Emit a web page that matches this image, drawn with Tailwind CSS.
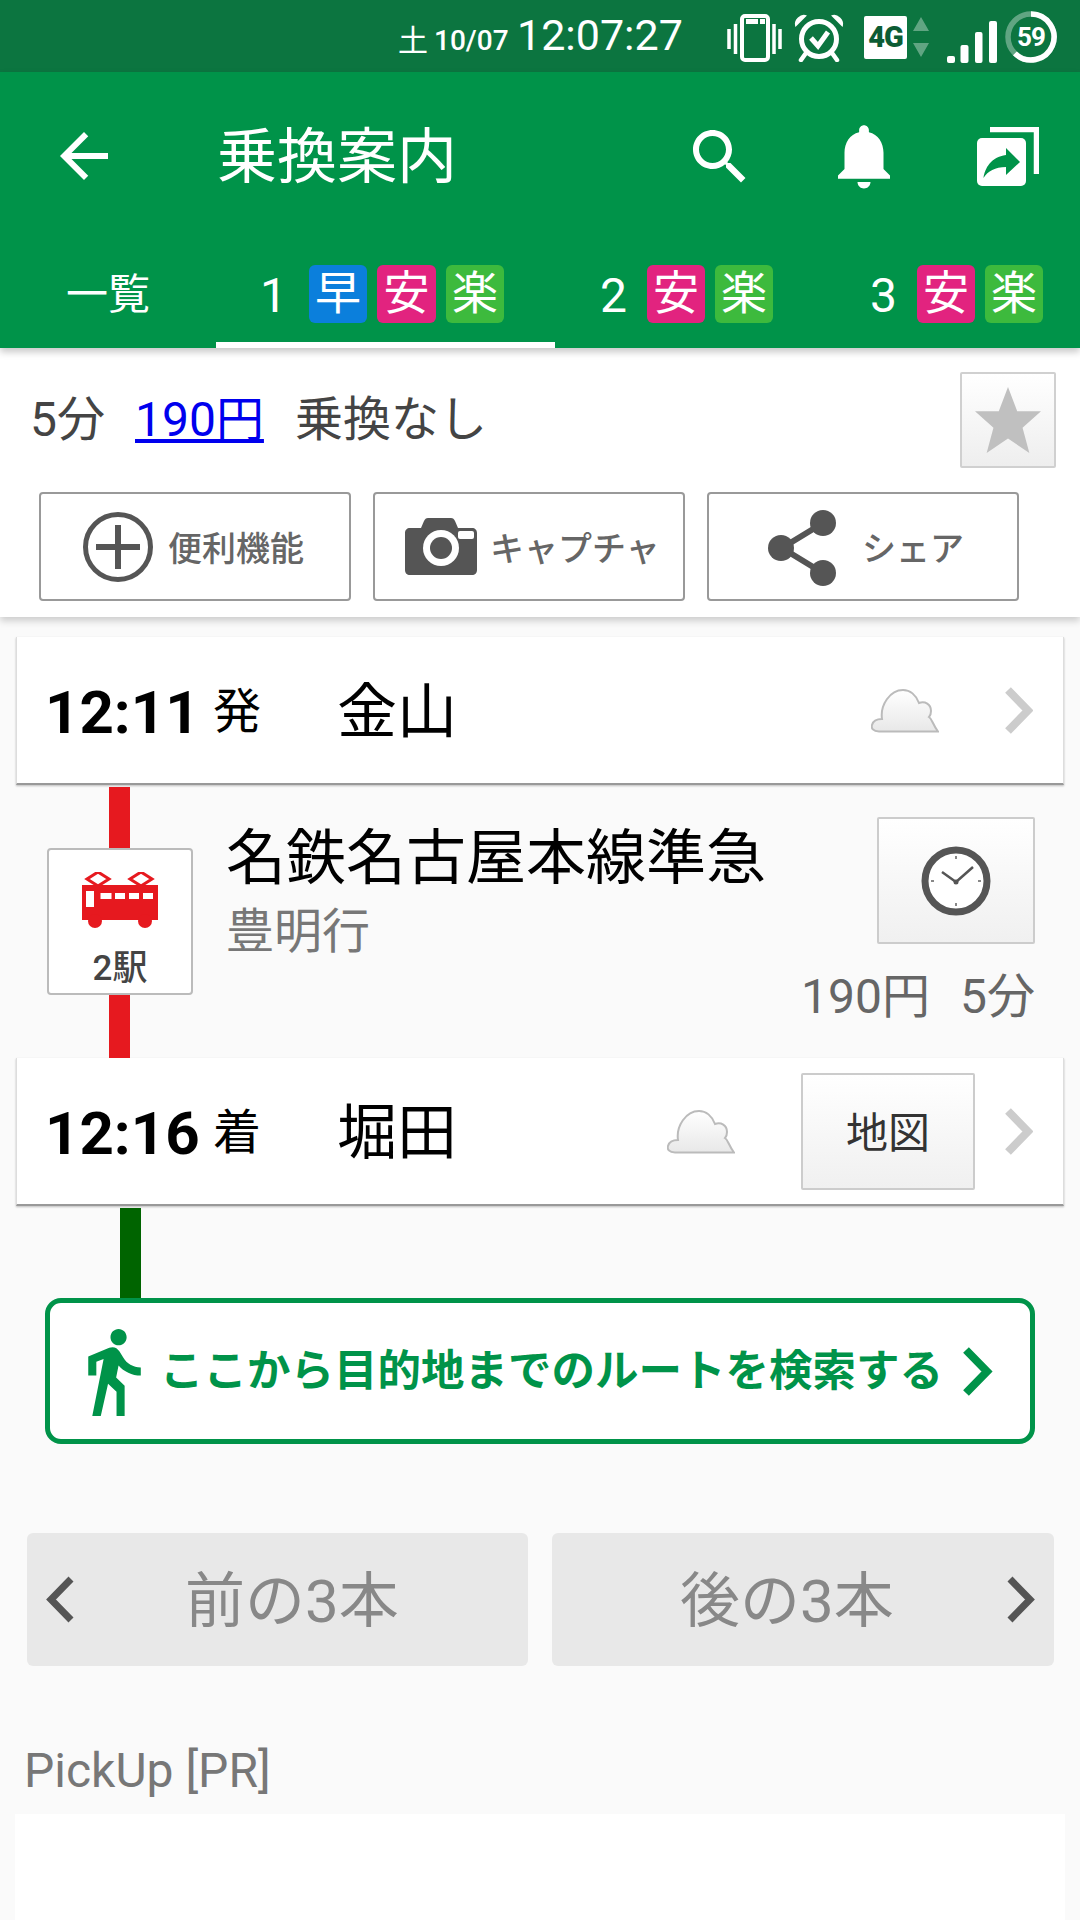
<!DOCTYPE html>
<html lang="ja">
<head>
  <meta charset="UTF-8" />
  <meta name="viewport" content="width=device-width, initial-scale=1.0" />
  <title>乗換案内</title>
  <script src="https://cdn.jsdelivr.net/npm/@tailwindcss/browser@4"></script>
</head>
<body class="bg-[#fafafa] w-[1080px] h-[1920px] overflow-hidden font-[Roboto,'Noto_Sans_CJK_JP',sans-serif]">

  <!-- STATUS BAR -->
  <div class="h-[72px] bg-[#0c7540] flex items-center text-white">
    <span class="ml-[398px] text-[30px] leading-none mt-[10px] w-[36px]">土</span>
    <span class="text-[28px] font-medium leading-none mt-[10px] w-[83px]">10/07</span>
    <span class="text-[43px] leading-none w-[209px] mt-[-2px]">12:07:27</span>
    <svg class="w-[56px] h-[48px] mt-[3px]" viewBox="0 0 56 48">
      <rect x="16" y="2" width="26" height="44" rx="3" fill="none" stroke="#fff" stroke-width="4"/>
      <rect x="20" y="5" width="12" height="5" fill="#fff"/>
      <rect x="34" y="5" width="5" height="5" fill="#fff"/>
      <path d="M3 15v20M9.500 10v30M48 10v30M54 15v20" stroke="#fff" stroke-width="3.500"/>
    </svg>
    <svg class="w-[52px] h-[48px] ml-[11px] mt-[3px]" viewBox="0 0 52 48">
      <circle cx="26" cy="25" r="17.500" fill="none" stroke="#fff" stroke-width="5"/>
      <path d="M18 24l7 8 10-14" fill="none" stroke="#fff" stroke-width="5"/>
      <path d="M3 11L12 2c-4-1-10 4-9 9zM49 11L40 2c4-1 10 4 9 9z" fill="#fff" stroke="#fff" stroke-width="2"/>
      <path d="M13 39l-5 7M39 39l5 7" stroke="#fff" stroke-width="4.500" stroke-linecap="round"/>
    </svg>
    <div class="w-[43px] h-[43px] ml-[19px] mt-[3px] bg-white rounded-[2px] text-[#0c5c34] text-[29px] leading-[43px] font-black text-center tracking-[-1px]">4G</div>
    <svg class="w-[16px] h-[40px] ml-[6px] mt-[2px]" viewBox="0 0 16 40">
      <path d="M8 0l8 14H0zM0 26h16L8 40z" fill="#fff" fill-opacity="0.35"/>
    </svg>
    <svg class="w-[50px] h-[42px] ml-[18px] mt-[11px]" viewBox="0 0 50 42">
      <rect x="0" y="35" width="8" height="7" rx="2" fill="#fff"/>
      <rect x="13.500" y="24" width="8" height="18" rx="2" fill="#fff"/>
      <rect x="28" y="11" width="7.500" height="31" rx="2" fill="#fff"/>
      <rect x="42" y="0" width="8" height="42" rx="2" fill="#fff"/>
    </svg>
    <div class="relative w-[52px] h-[52px] ml-[8px] mt-[1px] flex items-center justify-center">
      <svg class="absolute inset-0" viewBox="0 0 52 52">
        <circle cx="26" cy="26" r="23" fill="none" stroke="#fff" stroke-opacity="0.35" stroke-width="5.500"/>
        <path d="M26 3A23 23 0 1 1 9.900 42.400" fill="none" stroke="#fff" stroke-width="5.500"/>
      </svg>
      <span class="text-[26px] leading-none font-bold tracking-[-1px]">59</span>
    </div>
  </div>

  <div class="relative z-10 shadow-[0_4px_7px_rgba(0,0,0,0.22)]">
    <!-- APP BAR -->
    <div class="h-[168px] bg-[#009349] flex items-center text-white">
      <svg class="w-[72px] h-[72px] ml-[48px]" viewBox="0 0 24 24" fill="#fff"><path d="M20 11H7.830l5.590-5.590L12 4l-8 8 8 8 1.410-1.410L7.830 13H20v-2z"/></svg>
      <h1 class="ml-[97px] text-[60px] leading-none font-normal mt-[4px]">乗換案内</h1>
      <svg class="w-[72px] h-[72px] ml-[227px] mt-[2px]" viewBox="0 0 24 24" fill="#fff"><path d="M15.500 14h-.790l-.280-.270C15.410 12.590 16 11.110 16 9.500 16 5.910 13.090 3 9.500 3S3 5.910 3 9.500 5.910 16 9.500 16c1.610 0 3.090-.590 4.230-1.570l.270.280v.790l5 4.990L20.490 19l-4.990-5zm-6 0C7.010 14 5 11.990 5 9.500S7.010 5 9.500 5 14 7.010 14 9.500 11.990 14 9.500 14z"/></svg>
      <svg class="w-[78px] h-[78px] ml-[69px]" viewBox="0 0 24 24" fill="#fff"><path d="M12 22c1.100 0 2-.900 2-2h-4c0 1.100.890 2 2 2zm6-6v-5c0-3.070-1.640-5.640-4.500-6.320V4c0-.830-.670-1.500-1.500-1.500s-1.500.670-1.500 1.500v.680C7.630 5.360 6 7.920 6 11v5l-2 2v1h16v-1l-2-2z"/></svg>
      <svg class="w-[62px] h-[59px] ml-[74px]" viewBox="0 0 62 59">
        <path d="M13 2.500h46.500V47" fill="none" stroke="#fff" stroke-width="5.500"/>
        <rect x="0" y="11" width="49" height="48" rx="5" fill="#fff"/>
        <path d="M29 21L43 35 29 48v-8c-11 0-18 4-22.500 11C8 41 14 30 29 28z" fill="#009349"/>
      </svg>
    </div>
    <!-- TABS -->
    <div class="h-[108px] bg-[#009349] flex text-white">
      <div class="w-[216px] pl-[66px] pt-[30px] text-[42px] leading-[50px]">一覧</div>
      <div class="w-[339px] pl-[44px] flex items-center border-b-[6px] border-white">
        <span class="w-[49px] text-[48px] leading-none mt-[10px]">1</span>
        <span class="w-[58px] h-[58px] mt-[6px] mr-[10px] rounded-md bg-[#0b7fdc] text-[46px] leading-[57px] text-center">早</span>
        <span class="w-[59px] h-[58px] mt-[6px] mr-[10px] rounded-md bg-[#e2237f] text-[46px] leading-[57px] text-center">安</span>
        <span class="w-[58px] h-[58px] mt-[6px] rounded-md bg-[#3dba3d] text-[46px] leading-[57px] text-center">楽</span>
      </div>
      <div class="w-[270px] pl-[45px] flex items-center">
        <span class="w-[47px] text-[48px] leading-none mt-[4px]">2</span>
        <span class="w-[58px] h-[58px] mr-[10px] rounded-md bg-[#e2237f] text-[46px] leading-[57px] text-center">安</span>
        <span class="w-[58px] h-[58px] rounded-md bg-[#3dba3d] text-[46px] leading-[57px] text-center">楽</span>
      </div>
      <div class="w-[255px] pl-[45px] flex items-center">
        <span class="w-[47px] text-[48px] leading-none mt-[4px]">3</span>
        <span class="w-[58px] h-[58px] mr-[10px] rounded-md bg-[#e2237f] text-[46px] leading-[57px] text-center">安</span>
        <span class="w-[58px] h-[58px] rounded-md bg-[#3dba3d] text-[46px] leading-[57px] text-center">楽</span>
      </div>
    </div>
  </div>

  <!-- SUMMARY -->
  <section class="h-[269px] bg-white shadow-[0_4px_7px_rgba(0,0,0,0.18)] relative pt-[24px]">
    <div class="flex items-center h-[96px] pl-[30px] text-[48px] text-[#444] leading-none">
      <span class="w-[105px]">5分</span>
      <a href="#" class="w-[160px] text-[#0000ee] underline">190円</a>
      <span>乗換なし</span>
      <button class="ml-auto mr-[24px] w-[96px] h-[96px] flex items-center justify-center border-2 border-[#d0d0d0] rounded-[2px] bg-linear-to-b from-white to-[#eeeeee]">
        <svg class="w-[66px] h-[66px]" viewBox="0 0 68 68"><path d="M34 0l9.500 25H68L49 42l7 26-22-15-22 15 7-26L0 25h24.500z" fill="#c0c0c0"/></svg>
      </button>
    </div>
    <div class="flex mt-[24px] ml-[39px] text-[34px] font-medium text-[#666] leading-none">
      <button class="w-[312px] h-[109px] border-2 border-[#999] rounded-[4px] flex items-center pl-[42px] pt-[4px]">
        <svg class="w-[70px] h-[70px] mr-[15px] mt-[-4px]" viewBox="0 0 70 70" fill="none" stroke="#555"><circle cx="35" cy="35" r="32.500" stroke-width="5"/><path d="M13 35h44M35 13v44" stroke-width="6"/></svg>
        便利機能
      </button>
      <button class="w-[312px] h-[109px] ml-[22px] border-2 border-[#999] rounded-[4px] flex items-center pl-[30px] pt-[4px]">
        <svg class="w-[72px] h-[57px] mr-[13px] mt-[-4px]" viewBox="0 0 72 57">
          <path d="M5 10h11l3-7c1-2 2-3 4-3h23c2 0 3 1 4 3l3 7h14c3 0 5 2 5 5v37c0 3-2 5-5 5H5c-3 0-5-2-5-5V15c0-3 2-5 5-5z" fill="#555"/>
          <circle cx="36" cy="30" r="18" fill="#fff"/><circle cx="36" cy="30" r="11" fill="#555"/>
          <rect x="53" y="13" width="16" height="8" rx="2" fill="#fff"/>
        </svg>
        キャプチャ
      </button>
      <button class="w-[312px] h-[109px] ml-[22px] border-2 border-[#999] rounded-[4px] flex items-center pl-[57px] pt-[4px]">
        <svg class="w-[72px] h-[76px] mr-[24px] mt-[-2px]" viewBox="0 0 72 76" fill="#555">
          <path d="M57 13L16 38l41 25" fill="none" stroke="#555" stroke-width="6"/>
          <circle cx="57" cy="13" r="13"/><circle cx="15" cy="38" r="13"/><circle cx="57" cy="63" r="13"/>
        </svg>
        シェア
      </button>
    </div>
  </section>

  <!-- ROUTE -->
  <main class="pt-[20px]">
    <div class="mx-[16px] h-[148px] bg-white border-x border-[#ddd] border-b-2 border-b-[#999] shadow-[0_1px_2px_rgba(0,0,0,0.25)] flex items-center pl-[28px] pr-[30px] text-black">
      <span class="w-[168px] text-[60px] font-bold leading-none mt-[6px]">12:11</span>
      <span class="w-[124px] text-[48px] leading-none mt-[4px]">発</span>
      <span class="text-[60px] leading-none mt-[6px]">金山</span>
      <svg class="ml-auto w-[68px] h-[45px]" viewBox="0 0 68 45">
        <defs><linearGradient id="cloud" x1="0" y1="0" x2="0" y2="1"><stop offset="0" stop-color="#fff"/><stop offset="1" stop-color="#e8e8e8"/></linearGradient></defs>
        <path d="M8 43.500C2 43.500 0 40 1 37c1-4 5-6 10-6 -2-14 8-29 21-29 7 0 13 5 16 13 6-2 12 1 12 8 0 3-1 5-2 6 3 2 3 6 9 14.500z" fill="url(#cloud)" stroke="#bbb" stroke-width="2"/>
      </svg>
      <svg class="ml-[66px] w-[28px] h-[47px]" viewBox="0 0 28 47"><path d="M3 3l20 20.500L3 44" fill="none" stroke="#ccc" stroke-width="8"/></svg>
    </div>

    <div class="relative h-[273px] flex pl-[47px]">
      <div class="absolute left-[109px] top-[2px] bottom-0 w-[21px] bg-[#e6191f]"></div>
      <div class="relative mt-[63px] w-[146px] h-[147px] bg-white border-2 border-[#bbb] rounded-[4px] flex flex-col items-center pt-[22px]">
        <svg class="w-[76px] h-[56px]" viewBox="0 0 76 56" fill="#e6191f">
          <path d="M16 0l11 7-11 7L5 7zM59 0l11 7-11 7-11-7z" fill="none" stroke="#e6191f" stroke-width="3"/>
          <path d="M0 13h76v35H0z"/>
          <circle cx="13" cy="49" r="7"/><circle cx="63" cy="49" r="7"/>
          <path d="M4 19h8v16H4zM18.500 21h11v6h-11zM33 21h10v6H33zM47 21h10v6H47zM61 21h10v6H61z" fill="#fff"/>
        </svg>
        <span class="mt-[21px] text-[35px] font-medium text-[#444] leading-[40px]">2駅</span>
      </div>
      <div class="ml-[33px] pt-[44px]">
        <div class="text-[60px] text-black leading-[60px] whitespace-nowrap">名鉄名古屋本線準急</div>
        <div class="mt-[19px] text-[48px] text-[#777] leading-[48px]">豊明行</div>
      </div>
      <div class="absolute right-[45px] top-[32px] flex flex-col items-end">
        <button class="w-[158px] h-[127px] border-2 border-[#ccc] rounded-[2px] bg-linear-to-b from-white to-[#f0f0f0] flex items-center justify-center">
          <svg class="w-[70px] h-[70px]" viewBox="0 0 70 70">
            <circle cx="35" cy="35" r="31" fill="#fff" stroke="#555" stroke-width="7"/>
            <path d="M35 36L21 26M35 36L52 21" stroke="#555" stroke-width="2.500" fill="none"/>
            <circle cx="35" cy="36" r="2.500" fill="#555"/>
            <path d="M35 10v3M35 57v3M10 35h3M57 35h3" stroke="#888" stroke-width="2"/>
          </svg>
        </button>
        <div class="mt-[25px] flex gap-[30px] text-[48px] leading-[56px] text-[#666] whitespace-nowrap"><span>190円</span><span>5分</span></div>
      </div>
    </div>

    <div class="mx-[16px] h-[148px] bg-white border-x border-[#ddd] border-b-2 border-b-[#999] shadow-[0_1px_2px_rgba(0,0,0,0.25)] flex items-center pl-[28px] pr-[30px] text-black">
      <span class="w-[168px] text-[60px] font-bold leading-none mt-[6px]">12:16</span>
      <span class="w-[124px] text-[48px] leading-none mt-[4px]">着</span>
      <span class="text-[60px] leading-none mt-[6px]">堀田</span>
      <svg class="ml-auto w-[68px] h-[45px]" viewBox="0 0 68 45">
        <path d="M8 43.500C2 43.500 0 40 1 37c1-4 5-6 10-6 -2-14 8-29 21-29 7 0 13 5 16 13 6-2 12 1 12 8 0 3-1 5-2 6 3 2 3 6 9 14.500z" fill="url(#cloud)" stroke="#bbb" stroke-width="2"/>
      </svg>
      <button class="ml-[66px] w-[174px] h-[117px] mt-[1px] pt-[4px] border-2 border-[#ccc] rounded-[2px] bg-linear-to-b from-white to-[#f0f0f0] text-[42px] text-[#333] leading-none">地図</button>
      <svg class="ml-[30px] w-[28px] h-[47px]" viewBox="0 0 28 47"><path d="M3 3l20 20.500L3 44" fill="none" stroke="#ccc" stroke-width="8"/></svg>
    </div>

    <div class="h-[92px] pl-[120px] pt-[2px]"><div class="h-full w-[21px] bg-[#006400]"></div></div>

    <a href="#" class="ml-[45px] w-[990px] h-[146px] bg-white border-[5px] border-[#009349] rounded-[16px] flex items-center text-[#009349]">
      <svg class="w-[97px] h-[97px] ml-[14px] shrink-0" viewBox="0 0 24 24" fill="#009349"><path d="M13.500 5.500c1.100 0 2-.900 2-2s-.900-2-2-2-2 .900-2 2 .900 2 2 2zM9.800 8.900L7 23h2.100l1.800-8 2.100 2v6h2v-7.500l-2.100-2 .600-3C14.800 12 16.800 13 19 13v-2c-1.900 0-3.500-1-4.300-2.400l-1-1.600c-.400-.600-1-1-1.700-1-.300 0-.500.100-.800.100L6 8.300V13h2V9.600l1.800-.700"/></svg>
      <span class="ml-[-1px] mt-[2px] text-[43.500px] font-bold leading-none whitespace-nowrap">ここから目的地までのルートを検索する</span>
      <svg class="ml-[19px] w-[31px] h-[49px]" viewBox="0 0 31 49"><path d="M4 3l21 21.500L4 46" fill="none" stroke="#009349" stroke-width="8"/></svg>
    </a>

    <!-- PREV / NEXT -->
    <div class="mt-[89px] ml-[27px] flex gap-[24px] text-[60px] text-[#888] leading-none">
      <button class="relative w-[501px] h-[133px] bg-[#e8e8e8] rounded-[6px] pl-[158px] text-left pt-[4px]">
        <svg class="absolute left-[19px] top-[43px] w-[28px] h-[47px]" viewBox="0 0 28 47"><path d="M25 3L5 23.500 25 44" fill="none" stroke="#555" stroke-width="7"/></svg>
        前の3本
      </button>
      <button class="relative w-[502px] h-[133px] bg-[#e8e8e8] rounded-[6px] pl-[128px] text-left pt-[4px]">
        <svg class="absolute right-[19px] top-[43px] w-[28px] h-[47px]" viewBox="0 0 28 47"><path d="M3 3l20 20.500L3 44" fill="none" stroke="#555" stroke-width="7"/></svg>
        後の3本
      </button>
    </div>

    <!-- PICKUP -->
    <h2 class="mt-[78px] ml-[24px] text-[48px] font-normal text-[#777] leading-[54px]">PickUp [PR]</h2>
    <div class="mt-[16px] mx-[15px] h-[200px] bg-white"></div>
  </main>

</body>
</html>
